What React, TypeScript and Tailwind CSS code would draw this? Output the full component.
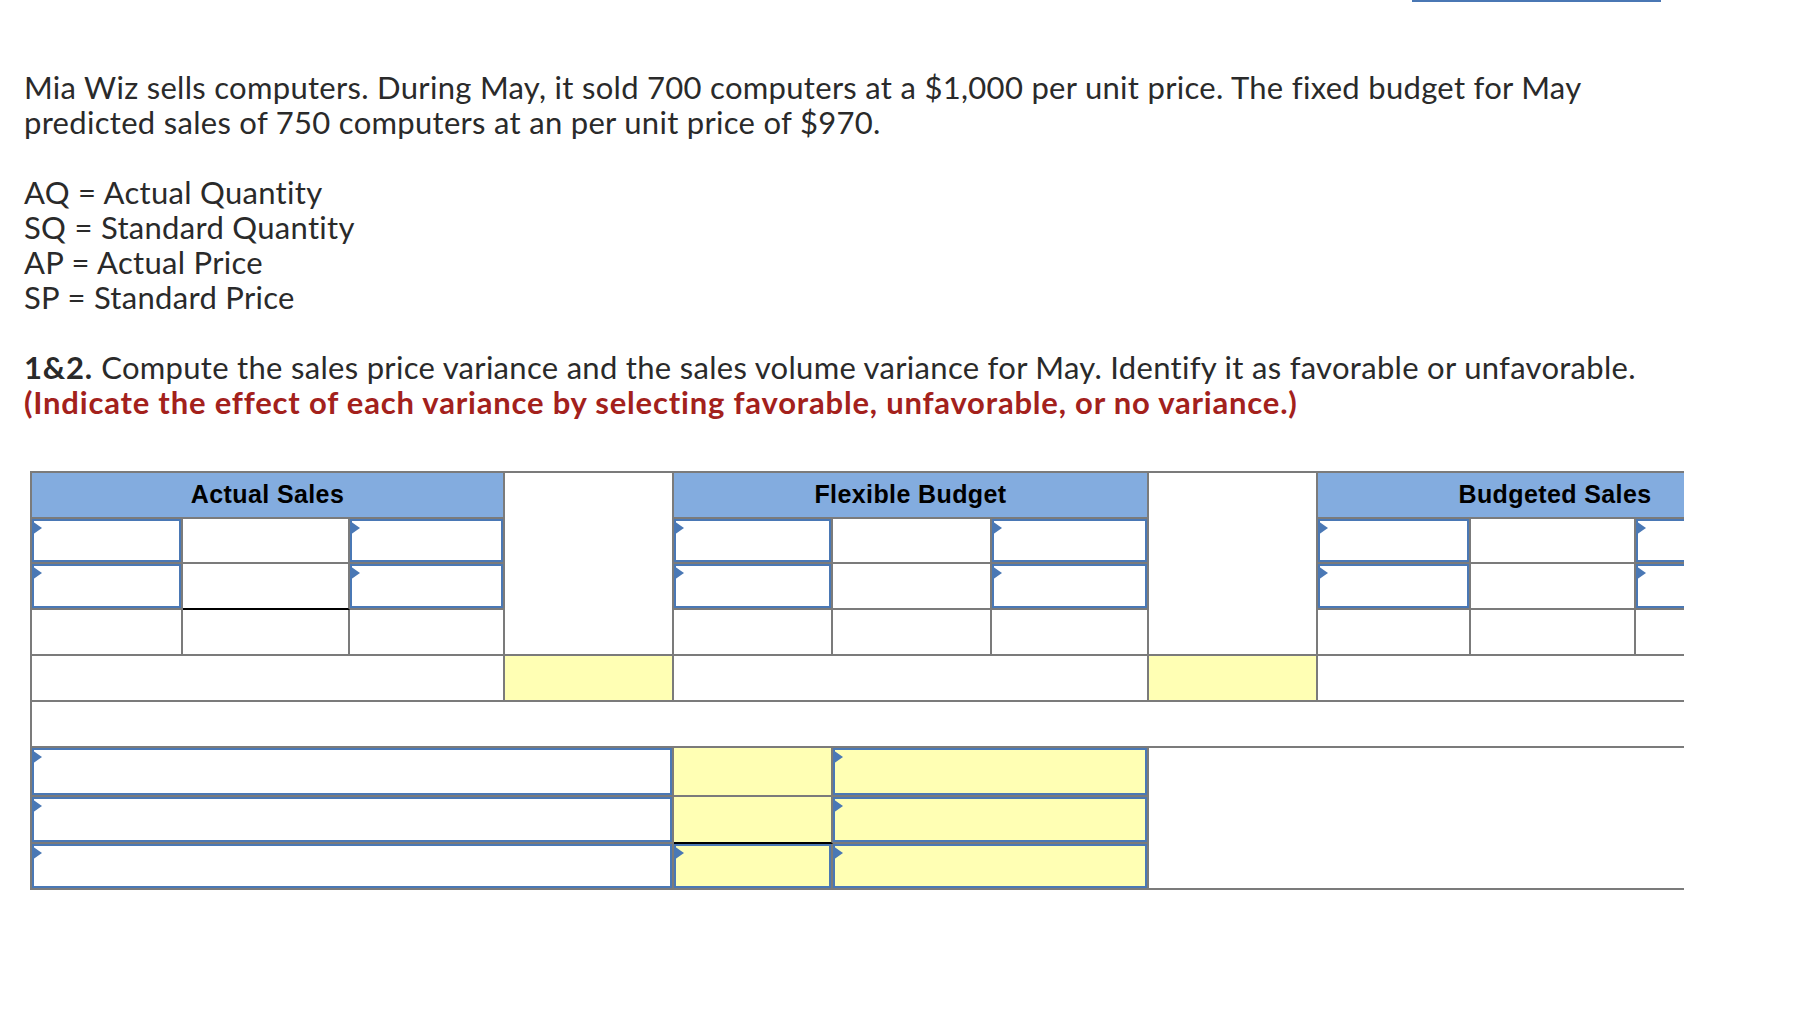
import React from "react";

const cellBase = "border-r-2 border-b-2 border-[#7b7b7b]";

// little blue flag in the corner of every answer box
const Marker = () => (
  <span className="absolute -left-[2px] top-0 h-0 w-0 border-y-[7px] border-l-[10px] border-y-transparent border-l-[#4a78b5]" />
);

type CellProps = { className?: string; children?: React.ReactNode };

const Cell = ({ className = "", children }: CellProps) => (
  <div className={`${cellBase} ${className}`}>{children}</div>
);

const InputCell = ({ className = "", yellow = false }: { className?: string; yellow?: boolean }) => (
  <div className={`${cellBase} ${yellow ? "bg-[#ffffb4]" : "bg-white"} ${className}`}>
    <div className="relative h-full w-full border-2 border-[#4a78b5]">
      <Marker />
    </div>
  </div>
);

const HeaderCell = ({ title, className = "" }: { title: string; className?: string }) => (
  <div
    className={`${cellBase} ${className} flex items-center justify-center bg-[#83acdf] font-['Liberation_Sans',Arial,sans-serif] text-[25px] font-bold tracking-[0.4px] text-black`}
  >
    {title}
  </div>
);

const App = () => {
  return (
    <div className="min-h-screen bg-white font-['Lato','Open_Sans',sans-serif] text-[#2a2a2a]">
      <div className="ml-[1412px] h-[2px] w-[249px] bg-[#4a77b4]" />

      <div className="pl-[24px] pt-[68px] text-[31px] leading-[35px] tracking-[0.3px]">
        <p>
          Mia Wiz sells computers. During May, it sold 700 computers at a $1,000 per unit price. The fixed budget for May
          <br />
          predicted sales of 750 computers at an per unit price of $970.
        </p>

        <div className="mt-[35px]">
          <p>AQ = Actual Quantity</p>
          <p>SQ = Standard Quantity</p>
          <p>AP = Actual Price</p>
          <p>SP = Standard Price</p>
        </div>

        <p className="mt-[35px]">
          <strong className="font-bold tracking-[0.8px]">1&amp;2.</strong> Compute the sales price variance and the sales
          volume variance for May. Identify it as favorable or unfavorable.
          <br />
          <span className="font-bold tracking-[0.8px] text-[#a3211c]">
            (Indicate the effect of each variance by selecting favorable, unfavorable, or no variance.)
          </span>
        </p>
      </div>

      <div className="ml-[30px] mt-[51px] w-[1654px] overflow-hidden">
        <div className="grid w-[1764px] grid-cols-[151px_167px_155px_169px_159px_159px_157px_169px_153px_165px_158px] grid-rows-[46px_45px_46px_46px_46px_46px_49px_47px_46px] border-l-2 border-t-2 border-[#7b7b7b]">
          {/* headings */}
          <HeaderCell title="Actual Sales" className="col-span-3 col-start-1 row-start-1" />
          <Cell className="col-start-4 row-span-4 row-start-1" />
          <HeaderCell title="Flexible Budget" className="col-span-3 col-start-5 row-start-1" />
          <Cell className="col-start-8 row-span-4 row-start-1" />
          <HeaderCell title="Budgeted Sales" className="col-span-3 col-start-9 row-start-1" />

          {/* quantity x price rows */}
          <InputCell />
          <Cell />
          <InputCell />
          <InputCell />
          <Cell />
          <InputCell />
          <InputCell />
          <Cell />
          <InputCell />

          <InputCell />
          <Cell className="border-b-black" />
          <InputCell />
          <InputCell />
          <Cell />
          <InputCell />
          <InputCell />
          <Cell />
          <InputCell />

          {[0, 1, 2, 3, 4, 5, 6, 7, 8].map((i) => (
            <Cell key={i} />
          ))}

          {/* variance row */}
          <Cell className="col-span-3" />
          <Cell className="bg-[#ffffb4]" />
          <Cell className="col-span-3" />
          <Cell className="bg-[#ffffb4]" />
          <Cell className="col-span-3" />

          <Cell className="col-span-11" />

          {/* summary rows */}
          <InputCell className="col-span-4" />
          <Cell className="bg-[#ffffb4]" />
          <InputCell yellow className="col-span-2" />
          <div className="col-span-4 row-span-3 border-b-2 border-[#7b7b7b]" />

          <InputCell className="col-span-4" />
          <Cell className="border-b-black bg-[#ffffb4]" />
          <InputCell yellow className="col-span-2" />

          <InputCell className="col-span-4" />
          <InputCell yellow />
          <InputCell yellow className="col-span-2" />
        </div>
      </div>
    </div>
  );
};

export default App;
